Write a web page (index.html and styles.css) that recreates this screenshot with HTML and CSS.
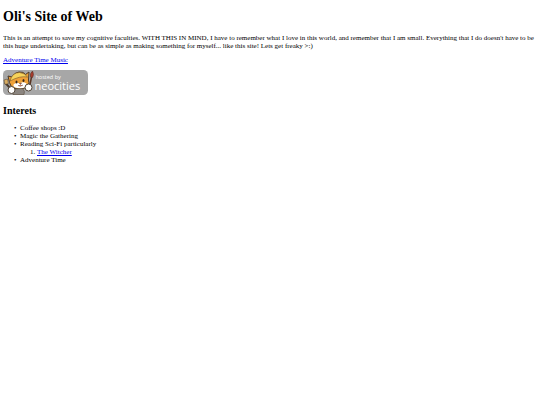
FILE: index.html
```html
<!DOCTYPE html>
<html lang="en">
<head>
    <meta charset="UTF-8">
    <meta name="viewport" content="width=device-width, initial-scale=1.0">
    <title>Oli's Site of Web</title>
    <link rel="stylesheet" href="styles.css">
</head>
<body>
    <h1>Oli's Site of Web</h1>
    <p>This is an attempt to save my cognitive faculties. WITH THIS IN MIND, I have to remember what I love in this world, and remember that I am small. Everything that I do doesn't have to be this huge undertaking, but can be as simple as making something for myself... like this site! Lets get freaky &gt;:)</p>
    <p><a href="#music">Adventure Time Music</a></p>
    <a class="host" href="https://neocities.org" aria-label="hosted by neocities">
        <svg class="badge" viewBox="0 0 170 50">
            <rect width="170" height="50" rx="9" fill="#a7a7a7"/>
            <!-- cat -->
            <path d="M13 25 L10 12 L18 14 Q23 5 32 4 Q41 3 45 9 L52 4 L51 20 Q54 31 46 35 Q35 41 23 37 Q14 33 13 25Z" fill="#efa138" stroke="#4b3928" stroke-width="2"/>
            <path d="M14 22 Q18 5 33 5 Q44 6 49 14 Q34 11 14 22Z" fill="#f6d35b" stroke="#604425" stroke-width="1"/>
            <path d="M21 29 Q27 23 33 27 Q40 22 47 27 Q50 34 40 36 Q27 38 21 33Z" fill="#fff"/>
            <ellipse cx="27" cy="24" rx="2" ry="3" fill="#35251c"/>
            <ellipse cx="41" cy="21" rx="2" ry="3" fill="#35251c"/>
            <path d="M33 27 L37 26 L35 29Z M30 31 Q35 34 40 30" fill="#c85b3a" stroke="#543629"/>
            <path d="M22 38 Q17 43 20 49 L42 49 Q45 42 39 37Z" fill="#8b8580" stroke="#51412f"/>
            <!-- paws and tools -->
            <path d="M4 25 L14 36" stroke="#4a3a2b" stroke-width="4"/>
            <path d="M2 20 L9 18 L11 27 L4 29Z" fill="#d8ad62" stroke="#4d3c2c"/>
            <circle cx="17" cy="40" r="7" fill="#fff" stroke="#504438" stroke-width="2"/>
            <path d="M53 34 L57 14" stroke="#593524" stroke-width="3"/>
            <path d="M55 14 Q53 7 59 2 Q63 9 59 15Z" fill="#a93c2c" stroke="#4a3128"/>
            <circle cx="51" cy="35" r="7" fill="#fff" stroke="#504438" stroke-width="2"/>
            <text class="badge-small" x="65" y="18">hosted by</text>
            <text class="badge-name" x="63" y="40">neocities</text>
        </svg>
    </a>
    <h2>Interets</h2>
    <ul>
        <li>Coffee shops :D</li>
        <li>Magic the Gathering</li>
        <li>Reading Sci-Fi particularly
            <ol>
                <li><a href="#witcher">The Witcher</a></li>
            </ol>
        </li>
        <li>Adventure Time</li>
    </ul>
</body>
</html>
```
FILE: styles.css
```css
body {
    margin: 9px 3px;
    font-family: "Liberation Serif", "Times New Roman", serif;
    font-size: 7px;
    line-height: 8px;
    color: #000;
    background-color: #fff;
}
h1 {
    margin: 0 0 9px;
    font-size: 14px;
    line-height: 16px;
}
p {
    margin: 0 0 6px;
}
a {
    color: #0000ee;
}
.host {
    display: block;
    width: 85px;
}
.badge {
    display: block;
    width: 100%;
}
.badge-small {
    font-family: "Open Sans", sans-serif;
    font-size: 11px;
    fill: #fff;
}
.badge-name {
    font-family: "Open Sans", sans-serif;
    font-size: 22px;
    fill: #fff;
}
h2 {
    margin: 10px 0 7px;
    font-size: 10px;
    line-height: 12px;
}
ul {
    margin: 0;
    padding-left: 17px;
    list-style-type: "•\a0\a0";
}
ol {
    margin: 0;
    padding-left: 17px;
}
```
